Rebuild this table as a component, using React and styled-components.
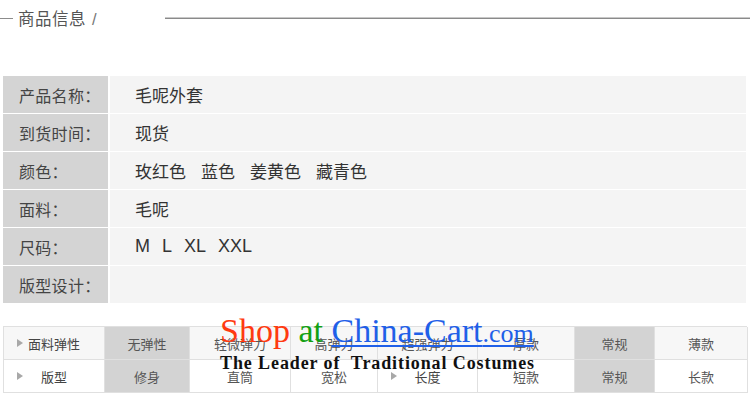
import React from "react";
import styled, { createGlobalStyle } from "styled-components";

const GlobalStyle = createGlobalStyle`
    body {
        margin: 0;
        background: #fff;
        font-family: "Noto Sans CJK SC", "Noto Sans", sans-serif;
    }
`;

const Page = styled.div`
    position: relative;
    width: 750px;
    height: 408px;
    overflow: hidden;
    background: #fff;
`;

const TitleBar = styled.div`
    display: flex;
    align-items: center;
    height: 36px;
`;

const ShortRule = styled.div`
    width: 13px;
    height: 1px;
    background: #8c8c8c;
`;

const Title = styled.div`
    margin-left: 5px;
    font-size: 16.5px;
    color: #555;
    letter-spacing: 0.5px;
    width: 147px;
    white-space: nowrap;
    line-height: 36px;
`;

const Slash = styled.span`
    margin-left: 6px;
    font-family: "Liberation Sans", sans-serif;
    color: #777;
`;

const LongRule = styled.div`
    flex: 1;
    height: 2px;
    background: #8a8a8a;
    border-top: 1px solid #c8c8c8;
    box-sizing: border-box;
`;

const InfoTable = styled.div`
    margin: 40px 4px 0 3px;
    display: flex;
    flex-direction: column;
    gap: 1px;
`;

const InfoRow = styled.div`
    display: grid;
    grid-template-columns: 105px 1fr;
    column-gap: 2px;
    height: 37px;
`;

const Label = styled.div`
    background: #d4d4d4;
    display: flex;
    align-items: center;
    padding-left: 16px;
    font-size: 16px;
    color: #444;
    letter-spacing: 0.3px;
`;

const Value = styled.div`
    background: #f4f4f4;
    display: flex;
    align-items: center;
    padding-left: 25px;
    gap: ${p => p.gap || 0}px;
    font-size: ${p => (p.latin ? 18 : 17)}px;
    color: #333;
    font-family: ${p => (p.latin ? '"Liberation Sans", sans-serif' : "inherit")};
`;

const SpecTable = styled.div`
    margin: 23px 3px 0 3px;
    width: 744px;
    display: grid;
    grid-template-columns: 101px 85px 101px 87px 100px 97px 80px 93px;
    border-top: 1px solid #e0e0e0;
    border-left: 1px solid #e0e0e0;
    box-sizing: border-box;
`;

const Cell = styled.div`
    position: relative;
    height: 32px;
    display: flex;
    align-items: center;
    justify-content: center;
    font-size: 13px;
    color: ${p => (p.head ? "#444" : "#555")};
    background: ${p => (p.active ? "#d3d3d3" : p.shade ? "#f7f7f7" : "#fff")};
    border-right: 1px solid #e0e0e0;
    border-bottom: 1px solid #e0e0e0;
`;

const Arrow = styled.span`
    position: absolute;
    left: 13px;
    top: 50%;
    transform: translateY(-50%);
    width: 0;
    height: 0;
    border-top: 4px solid transparent;
    border-bottom: 4px solid transparent;
    border-left: 6px solid #a8a8a8;
`;

const Watermark = styled.div`
    position: absolute;
    left: 220px;
    top: 312px;
    font-family: "Liberation Serif", serif;
    pointer-events: none;
`;

const MarkTop = styled.div`
    font-size: 34px;
    line-height: 38px;
    white-space: nowrap;
`;

const Word = styled.span`
    color: ${p => p.color};
    font-size: ${p => p.size || 34}px;
    text-decoration: ${p => (p.link ? "underline" : "none")};
    text-decoration-thickness: 2px;
    text-underline-offset: 3px;
`;

const MarkBottom = styled.div`
    font-size: 18px;
    font-weight: bold;
    color: #111;
    letter-spacing: 0.9px;
    line-height: 20px;
    white-space: nowrap;
`;

const info = [
    { label: "产品名称：", values: ["毛呢外套"] },
    { label: "到货时间：", values: ["现货"] },
    { label: "颜色：", values: ["玫红色", "蓝色", "姜黄色", "藏青色"], gap: 15 },
    { label: "面料：", values: ["毛呢"] },
    { label: "尺码：", values: ["M", "L", "XL", "XXL"], gap: 12, latin: true },
    { label: "版型设计：", values: [] },
];

const specRows = [
    [
        { text: "面料弹性", head: true },
        { text: "无弹性", active: true },
        { text: "轻微弹力" },
        { text: "高弹力" },
        { text: "超强弹力" },
        { text: "厚款" },
        { text: "常规", active: true },
        { text: "薄款" },
    ],
    [
        { text: "版型", head: true },
        { text: "修身", active: true },
        { text: "直筒" },
        { text: "宽松" },
        { text: "长度", head: true },
        { text: "短款" },
        { text: "常规", active: true },
        { text: "长款" },
    ],
];

const App = () => {
    return (
        <Page>
            <GlobalStyle />
            <TitleBar>
                <ShortRule />
                <Title>
                    商品信息<Slash>/</Slash>
                </Title>
                <LongRule />
            </TitleBar>

            <InfoTable>
                {info.map(row => (
                    <InfoRow key={row.label}>
                        <Label>{row.label}</Label>
                        <Value gap={row.gap} latin={row.latin}>
                            {row.values.map(v => (
                                <span key={v}>{v}</span>
                            ))}
                        </Value>
                    </InfoRow>
                ))}
            </InfoTable>

            <SpecTable>
                {specRows.map((row, r) =>
                    row.map((c, i) => (
                        <Cell
                            key={r + "-" + i}
                            head={c.head}
                            active={c.active}
                            shade={r === 0 && !c.active}
                        >
                            {c.head && <Arrow />}
                            {c.text}
                        </Cell>
                    ))
                )}
            </SpecTable>

            <Watermark>
                <MarkTop>
                    <Word color="#ff3a10">Shop </Word>
                    <Word color="#12a012">at </Word>
                    <Word color="#1f5fe8" link>
                        China-Cart<Word color="#1f5fe8" size={26}>.com</Word>
                    </Word>
                </MarkTop>
                <MarkBottom>The Leader of&nbsp; Traditional Costumes</MarkBottom>
            </Watermark>
        </Page>
    );
};

export default App;
